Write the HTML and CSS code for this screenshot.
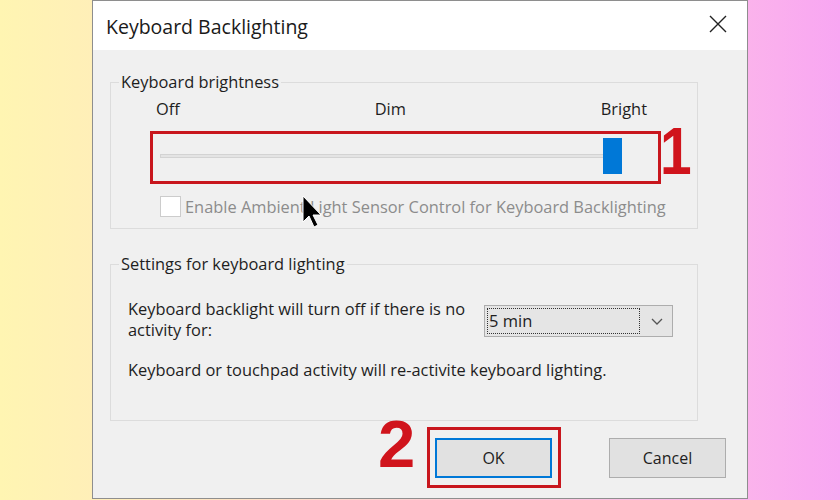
FILE: index.html
```html
<!DOCTYPE html>
<html lang="en">
<head>
    <meta charset="UTF-8">
    <meta name="viewport" content="width=device-width, initial-scale=1.0">
    <title>Keyboard Backlighting</title>
    <link rel="stylesheet" href="styles.css">
</head>
<body>
    <div class="dialog">
        <div class="title-bar">
            <span class="title">Keyboard Backlighting</span>
            <svg class="close-icon" width="18" height="18" viewBox="0 0 18 18">
                <path d="M1 1 L17 17 M17 1 L1 17" stroke="#222" stroke-width="1.4" fill="none"/>
            </svg>
        </div>

        <div class="dialog-body">
            <fieldset class="group group-brightness">
                <legend>Keyboard brightness</legend>
                <div class="level-labels">
                    <span>Off</span>
                    <span>Dim</span>
                    <span>Bright</span>
                </div>
                <div class="slider-mark">
                    <div class="slider">
                        <div class="slider-track"></div>
                        <div class="slider-thumb"></div>
                    </div>
                    <span class="step-number step-one">1</span>
                </div>
                <div class="check-row">
                    <span class="checkbox"></span>
                    <span class="check-label">Enable Ambient Light Sensor Control for Keyboard Backlighting</span>
                    <!-- mouse pointer -->
                    <svg class="pointer" width="20" height="34" viewBox="0 0 20 34">
                        <path d="M1 1 L1 27 L7 21 L12 32 L16 30 L11 20 L19 20 Z" fill="#000" stroke="#fff" stroke-width="1"/>
                    </svg>
                </div>
            </fieldset>

            <fieldset class="group group-timeout">
                <legend>Settings for keyboard lighting</legend>
                <div class="timeout-row">
                    <p class="timeout-text">Keyboard backlight will turn off if there is no activity for:</p>
                    <div class="select">
                        <span class="select-value">5 min</span>
                        <svg class="select-arrow" width="12" height="7" viewBox="0 0 12 7">
                            <path d="M1 1 L6 6 L11 1" stroke="#555" stroke-width="1.3" fill="none"/>
                        </svg>
                    </div>
                </div>
                <p class="note">Keyboard or touchpad activity will re-activite keyboard lighting.</p>
            </fieldset>

            <div class="buttons">
                <div class="button-mark">
                    <span class="step-number step-two">2</span>
                    <button class="btn btn-default">OK</button>
                </div>
                <button class="btn">Cancel</button>
            </div>
        </div>
    </div>
</body>
</html>
```

FILE: styles.css
```css
body {
    margin: 0;
    width: 840px;
    height: 500px;
    overflow: hidden;
    font-family: "Open Sans", "Noto Sans", sans-serif;
    font-size: 16.4px;
    color: #1e1e1e;
    background: linear-gradient(90deg, #fff5b2 0%, #ffefb8 11%, #fbb3ec 89%, #f8a6f2 100%);
}

.dialog {
    margin-left: 92px;
    width: 656px;
    height: 499px;
    box-sizing: border-box;
    border: 1px solid #8e8e8e;
    background-color: #f0f0f0;
    display: flex;
    flex-direction: column;
}

.title-bar {
    height: 49px;
    background-color: #fff;
    display: flex;
    align-items: center;
    justify-content: space-between;
    padding: 0 20px 0 13px;
}

.title {
    font-size: 19.5px;
    color: #1a1a1a;
    padding-top: 1px;
}

.close-icon {
    margin-bottom: 3px;
}

.dialog-body {
    padding: 0 49px 0 17px;
    display: flex;
    flex-direction: column;
}

/* group boxes */
.group {
    margin: 0;
    padding: 0;
    border: 1px solid #dcdcdc;
    min-width: 0;
}

.group legend {
    margin-left: 8px;
    padding: 0 2px;
    line-height: 20px;
    color: #1e1e1e;
}

.group-brightness {
    margin-top: 22px;
}

.level-labels {
    display: flex;
    justify-content: space-between;
    padding: 0 50px 0 45px;
    margin-top: 7px;
    line-height: 20px;
}

.slider-mark {
    position: relative;
    margin: 12px 0 0 39px;
    width: 511px;
    height: 53px;
    box-sizing: border-box;
    border: 3px solid #c8161d;
}

.slider {
    display: flex;
    align-items: center;
    padding: 4px 36px 7px 7px;
}

.slider-track {
    flex: 1;
    height: 2px;
    background-color: #e4e4e4;
    border: 1px solid #d3d3d3;
    margin-right: -2px;
}

.slider-thumb {
    width: 19px;
    height: 36px;
    background-color: #0078d7;
}

.step-number {
    position: absolute;
    font-family: "Liberation Sans", Arial, sans-serif;
    font-weight: bold;
    font-size: 67px;
    line-height: 1;
    color: #d0141c;
}

.step-one {
    left: 507px;
    top: -17px;
    transform: scaleX(0.85);
    transform-origin: left;
}

.check-row {
    position: relative;
    display: flex;
    align-items: center;
    margin: 11px 0 10px 0;
    padding-left: 49px;
}

.checkbox {
    width: 19px;
    height: 19px;
    border: 1px solid #cccccc;
    background-color: #fff;
    margin-right: 4px;
}

.check-label {
    color: #8c8c8c;
}

.pointer {
    position: absolute;
    left: 191px;
    top: 0;
}

.group-timeout {
    margin-top: 25px;
}

.timeout-row {
    display: flex;
    align-items: flex-start;
    padding: 24px 0 0 17px;
}

.timeout-text {
    margin: 0;
    width: 352px;
    line-height: 21px;
}

.select {
    margin: 7px 0 0 4px;
    width: 189px;
    height: 32px;
    box-sizing: border-box;
    border: 1px solid #adadad;
    background-color: #e5e5e5;
    display: flex;
    align-items: center;
    padding: 2px 9px 2px 2px;
}

.select-value {
    width: 153px;
    height: 26px;
    box-sizing: border-box;
    border: 1px dotted #333;
    line-height: 24px;
    padding-left: 1px;
    font-size: 16.5px;
}

.select-arrow {
    margin-left: auto;
}

.note {
    margin: 19px 0 0 17px;
    line-height: 21px;
    padding-bottom: 40px;
}

/* dialog buttons */
.buttons {
    display: flex;
    justify-content: flex-end;
    align-items: flex-start;
    margin-top: 6px;
    margin-right: -28px;
}

.button-mark {
    position: relative;
    border: 3px solid #c8161d;
    padding: 8px 6px 7px 5px;
    margin-right: 48px;
}

.step-two {
    left: -52px;
    top: -20px;
}

.btn {
    width: 117px;
    height: 40px;
    box-sizing: border-box;
    border: 1px solid #adadad;
    background-color: #e1e1e1;
    font-family: inherit;
    font-size: 16px;
    color: #1e1e1e;
    margin-top: 11px;
}

.btn-default {
    display: block;
    margin-top: 0;
    border: 2px solid #0078d7;
}
```
